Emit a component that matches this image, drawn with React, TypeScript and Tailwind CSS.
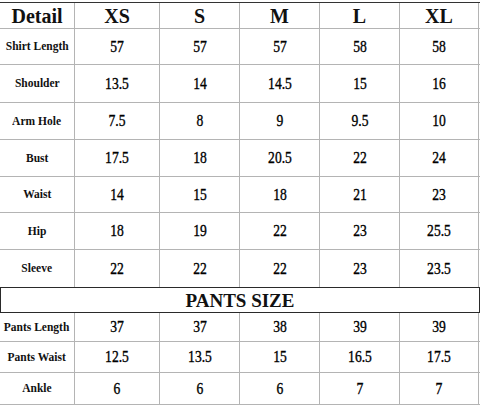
import React from "react";

const widths = ["w-[75px]", "w-[85px]", "w-[80px]", "w-[80px]", "w-[80px]", "w-[79px]"];

const top: [string, string[], string][] = [
  ["Shirt Length", ["57", "57", "57", "58", "58"], "h-[36px] border-b"],
  ["Shoulder", ["13.5", "14", "14.5", "15", "16"], "h-[38px] border-b"],
  ["Arm Hole", ["7.5", "8", "9", "9.5", "10"], "h-[37px] border-b"],
  ["Bust", ["17.5", "18", "20.5", "22", "24"], "h-[37px] border-b"],
  ["Waist", ["14", "15", "18", "21", "23"], "h-[36px] border-b"],
  ["Hip", ["18", "19", "22", "23", "25.5"], "h-[37px] border-b"],
  ["Sleeve", ["22", "22", "22", "23", "23.5"], "h-[37px]"],
];

const bottom: [string, string[], string][] = [
  ["Pants Length", ["37", "37", "38", "39", "39"], "h-[29px] border-b"],
  ["Pants Waist", ["12.5", "13.5", "15", "16.5", "17.5"], "h-[31px] border-b"],
  ["Ankle", ["6", "6", "6", "7", "7"], "h-[32px] border-b"],
];

function Row({ label, values, cls }: { label: string; values: string[]; cls: string }) {
  return (
    <div className={`flex border-[#b4b4b4] ${cls}`}>
      <div className={`${widths[0]} flex items-center justify-center border-r border-[#b4b4b4]`}>
        <span className="inline-block scale-x-[0.92] whitespace-nowrap font-['Liberation_Serif',serif] text-[12.5px] font-bold text-[#111]">{label}</span>
      </div>
      {values.map((v, i) => (
        <div key={i} className={`${widths[i + 1]} flex items-center justify-center border-r border-[#b4b4b4]`}>
          <span className="inline-block scale-x-[0.85] font-['Liberation_Serif',serif] text-[16px] text-black [-webkit-text-stroke:0.35px_black]">{v}</span>
        </div>
      ))}
    </div>
  );
}

export default function App() {
  const heads = ["Detail", "XS", "S", "M", "L", "XL"];
  return (
    <div className="w-[480px] h-[408px] bg-white pt-[2px] overflow-hidden font-['Liberation_Serif',serif]">
      <div className="flex h-[27px] border-t border-b border-t-[#333] border-b-[#b4b4b4]">
        {heads.map((h, i) => (
          <div key={h} className={`${widths[i]} flex items-center justify-center border-r border-[#b4b4b4]`}>
            <span className="font-['Liberation_Serif',serif] text-[20px] font-bold leading-none text-[#111]">{h}</span>
          </div>
        ))}
      </div>
      {top.map(([l, v, c]) => (
        <Row key={l} label={l} values={v} cls={c} />
      ))}
      <div className="flex h-[26px] items-center justify-center border-[1.5px] border-[#2a2a2a]">
        <span className="font-['Liberation_Serif',serif] text-[19px] font-bold leading-none text-[#111]">PANTS SIZE</span>
      </div>
      {bottom.map(([l, v, c]) => (
        <Row key={l} label={l} values={v} cls={c} />
      ))}
    </div>
  );
}
